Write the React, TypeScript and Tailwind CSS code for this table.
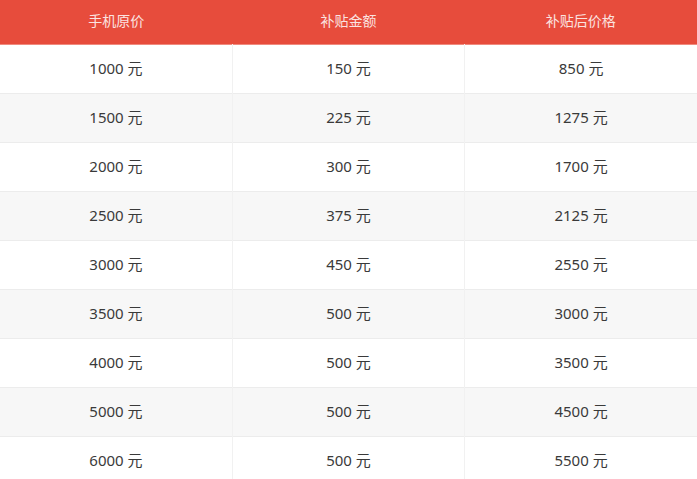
import React from 'react';

const rows = [
  ['1000 元', '150 元', '850 元'],
  ['1500 元', '225 元', '1275 元'],
  ['2000 元', '300 元', '1700 元'],
  ['2500 元', '375 元', '2125 元'],
  ['3000 元', '450 元', '2550 元'],
  ['3500 元', '500 元', '3000 元'],
  ['4000 元', '500 元', '3500 元'],
  ['5000 元', '500 元', '4500 元'],
  ['6000 元', '500 元', '5500 元'],
];

const headers = ['手机原价', '补贴金额', '补贴后价格'];

export default function App() {
  return (
    <div className="w-[697px] h-[479px] overflow-hidden bg-white" style={{ fontFamily: '"Noto Sans", "Noto Sans CJK SC", sans-serif' }}>
      <table className="w-full table-fixed border-collapse">
        <thead>
          <tr className="bg-[#e74c3c] border-b border-[#f08a7e]">
            {headers.map(h => (
              <th key={h} className="h-[44px] pb-[2px] font-normal text-[14px] text-[#fbe3e0] text-center">{h}</th>
            ))}
          </tr>
        </thead>
        <tbody>
          {rows.map((r, i) => (
            <tr key={i} className={`${i % 2 === 1 ? 'bg-[#f7f7f7]' : 'bg-white'} border-b border-[#ececec]`}>
              {r.map((c, j) => (
                <td key={j} className={`h-[49px] text-center text-[15px] text-[#3a3a3a] ${j < 2 ? 'border-r border-[#f1f1f1]' : ''}`}>{c}</td>
              ))}
            </tr>
          ))}
        </tbody>
      </table>
    </div>
  );
}
